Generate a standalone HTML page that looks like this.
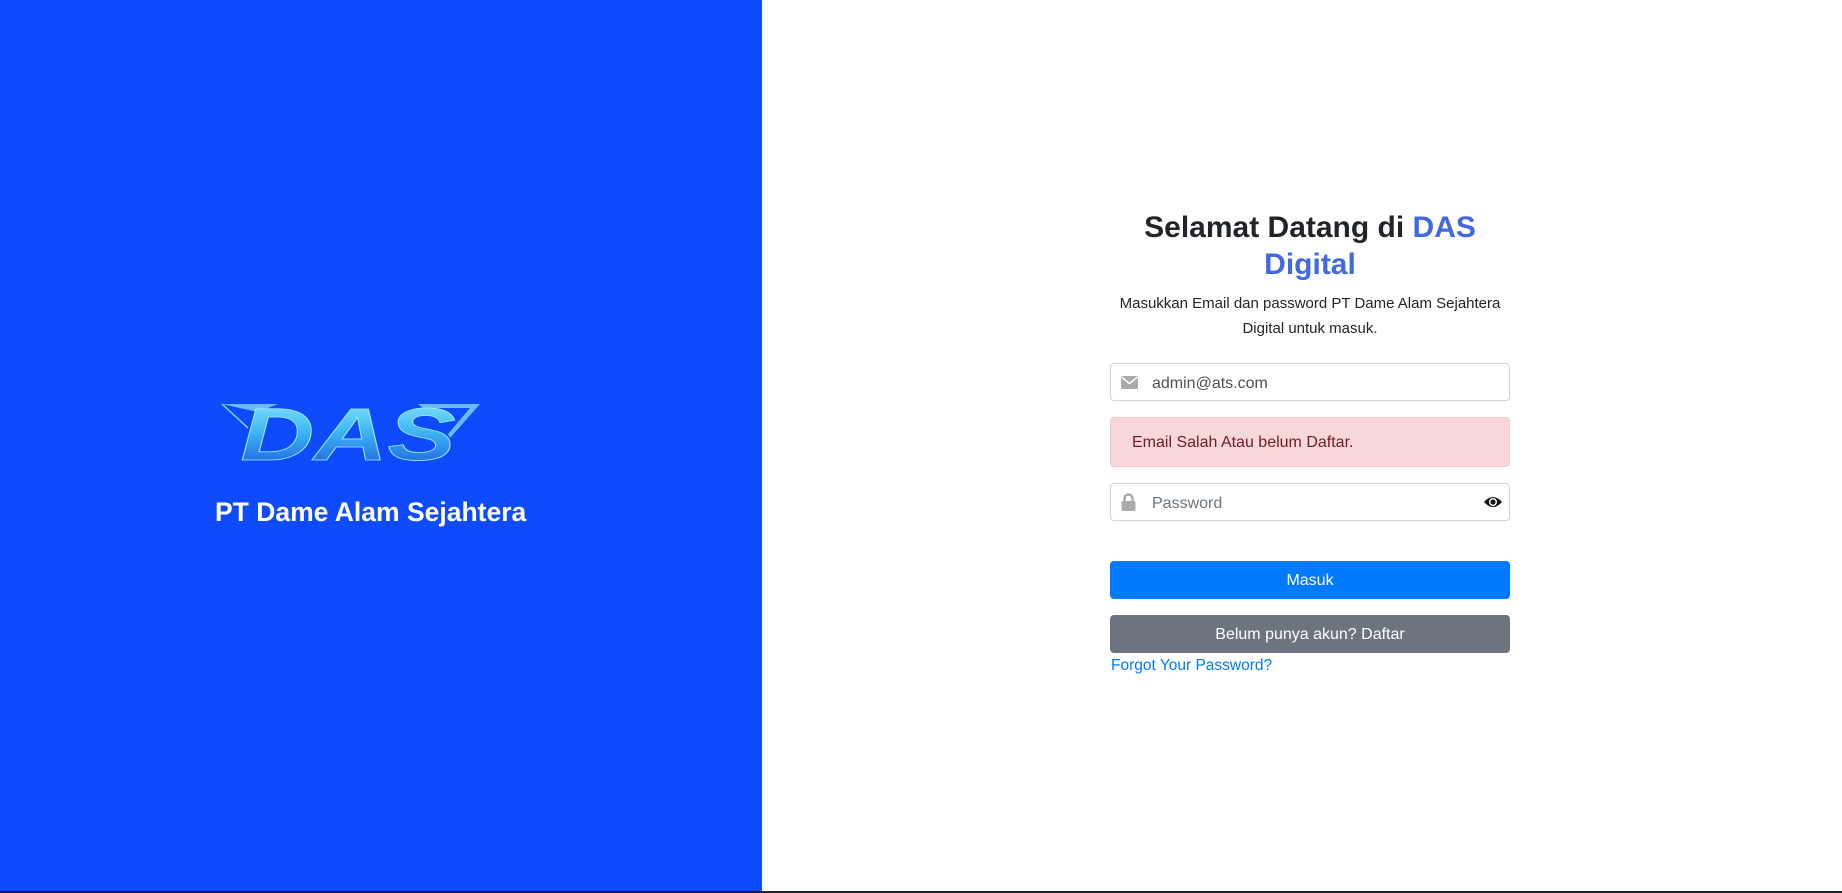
<!DOCTYPE html>
<html><head><meta charset="utf-8">
<style>
*{box-sizing:border-box;margin:0;padding:0}
html,body{width:1842px;height:893px;overflow:hidden;font-family:"Liberation Sans",sans-serif;background:#fff}
.left{position:absolute;left:0;top:0;width:762px;height:891px;background:#0d4bfc}
.bar{position:absolute;left:0;top:891px;width:1842px;height:2px;background:#1e2230}
.brand{position:absolute;left:215px;top:497px;color:#fff;font-weight:bold;font-size:26.5px;white-space:nowrap}
.logo{position:absolute;left:218px;top:398px}
.right{position:absolute;left:1110px;top:0;width:400px}
h1{position:absolute;top:209px;left:0;width:400px;text-align:center;font-size:30px;line-height:37px;color:#212529;font-weight:bold}
h1 span{color:#4169e1}
.sub{position:absolute;top:291px;left:-10px;width:420px;text-align:center;font-size:15px;line-height:25px;color:#212529}
.inp{position:absolute;left:0;width:400px;height:38px;border:1px solid #ced4da;border-radius:4px;background:#fff;font-size:16px;color:#495057}
.inp .t{position:absolute;left:41px;top:11px}
.alert{position:absolute;left:0;top:417px;width:400px;height:50px;background:#f8d7da;border:1px solid #f5c6cb;border-radius:4px;color:#721c24;font-size:16px;padding:16px 21px}
.btn{position:absolute;left:0;width:400px;height:38px;border-radius:4px;color:#fff;font-size:16px;text-align:center;line-height:40px}
.link{position:absolute;left:1px;top:657px;color:#007bff;font-size:15.5px}
</style></head><body>
<div class="left">
<svg class="logo" width="265" height="68" viewBox="0 0 265 68">
<defs><linearGradient id="g" x1="0" y1="0" x2="0" y2="1">
<stop offset="0" stop-color="#8ff0ff"/><stop offset="0.45" stop-color="#3fb8f5"/><stop offset="1" stop-color="#1550d8"/></linearGradient></defs>
<path d="M4 6 L60 6 L40 14 Z" fill="#7fd8ff" opacity="0.8"/>
<path d="M4 6 L30 30" stroke="#7fd8ff" stroke-width="1.5" fill="none"/>
<path d="M200 6 L262 6 L232 40 L230 36 L252 10 L205 10 Z" fill="#7fd8ff" opacity="0.8"/>
<text x="130" y="62" text-anchor="middle" font-family="Liberation Sans" font-weight="bold" font-style="italic" font-size="74" textLength="215" lengthAdjust="spacingAndGlyphs" fill="url(#g)" stroke="#9fe8ff" stroke-width="0.8">DAS</text>
</svg>
<div class="brand">PT Dame Alam Sejahtera</div>
</div>
<div class="right">
<h1>Selamat Datang di <span>DAS<br>Digital</span></h1>
<div class="sub">Masukkan Email dan password PT Dame Alam Sejahtera<br>Digital untuk masuk.</div>
<div class="inp" style="top:363px">
<svg style="position:absolute;left:10px;top:12px" width="17" height="13" viewBox="0 0 17 13"><rect x="0" y="0" width="17" height="13" rx="1.5" fill="#aaa"/><path d="M0.5 1 L8.5 7.5 L16.5 1" stroke="#fff" stroke-width="1.5" fill="none"/></svg>
<span class="t" style="color:#495057">admin@ats.com</span></div>
<div class="alert">Email Salah Atau belum Daftar.</div>
<div class="inp" style="top:483px">
<svg style="position:absolute;left:10px;top:9px" width="15" height="18" viewBox="0 0 15 18"><path d="M3.5 8 V5.5 A4 4 0 0 1 11.5 5.5 V8" stroke="#aaa" stroke-width="2.5" fill="none"/><rect x="0.5" y="8" width="14" height="10" rx="1.5" fill="#aaa"/></svg>
<span class="t" style="color:#6c757d">Password</span>
<svg style="position:absolute;right:6px;top:11px" width="20" height="14" viewBox="0 0 20 14"><path d="M1 7 Q10 -3 19 7 Q10 17 1 7 Z" fill="#111"/><circle cx="10" cy="7" r="4" fill="#fff"/><circle cx="10" cy="7" r="2.6" fill="#111"/></svg>
</div>
<div class="btn" style="top:561px;background:#007bff">Masuk</div>
<div class="btn" style="top:615px;background:#6c757d">Belum punya akun? Daftar</div>
<div class="link">Forgot Your Password?</div>
</div>
<div class="bar"></div>
</body></html>
